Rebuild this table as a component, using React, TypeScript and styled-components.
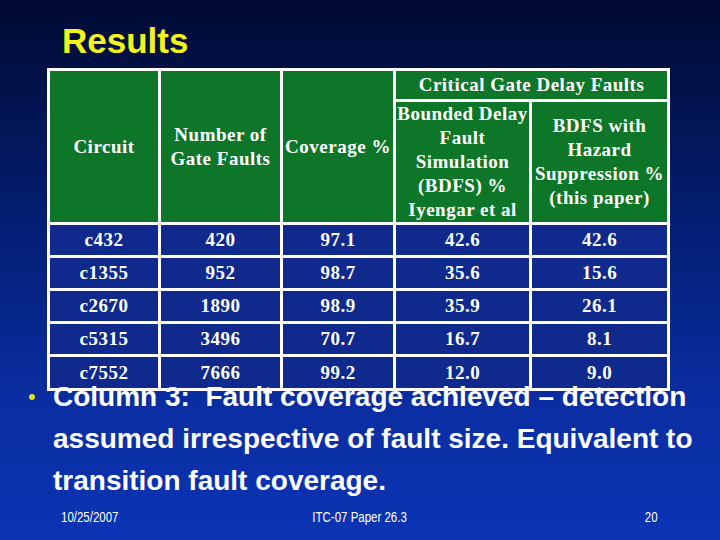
import React from "react";
import styled, { createGlobalStyle, css } from "styled-components";

const Global = createGlobalStyle`
  html, body { margin: 0; padding: 0; }
  body { width: 720px; height: 540px; overflow: hidden; }
`;

const serif = css`
  font-family: "Liberation Serif", "Times New Roman", "DejaVu Serif", serif;
  font-weight: 700;
  font-size: 19px;
  letter-spacing: 0.5px;
  color: #ffffff;
`;

const Slide = styled.div`
  position: relative;
  width: 720px;
  height: 540px;
  box-sizing: border-box;
  padding-top: 21px;
  background: linear-gradient(180deg, #000a32 0%, #02134d 18%, #05207a 45%, #0a2ea2 75%, #0a34b4 100%);
  display: flex;
  flex-direction: column;
  overflow: hidden;
`;

const Title = styled.h1`
  margin: 0 0 7px 62px;
  font-family: "Liberation Sans", Arial, sans-serif;
  font-weight: 700;
  font-size: 35px;
  line-height: 40px;
  color: #f4f41c;
`;

const Table = styled.table`
  ${serif};
  margin-left: 47px;
  width: 623px;
  table-layout: fixed;
  border-collapse: separate;
  border-spacing: 3px;
  background: #ffffff;
  position: relative;
  z-index: 0;
`;

const HeadCell = styled.th<{ $h?: number }>`
  ${serif};
  background: #0e7628;
  padding: 0;
  text-align: center;
  vertical-align: middle;
  line-height: 24px;
  white-space: nowrap;
  height: ${(p) => (p.$h ? `${p.$h}px` : "auto")};
`;

const DataCell = styled.td<{ $h: number }>`
  ${serif};
  background: #0f2a8c;
  padding: 0;
  text-align: center;
  vertical-align: middle;
  height: ${(p) => p.$h}px;
  line-height: 24px;
`;

const Body = styled.div`
  position: relative;
  z-index: 1;
  margin-top: -15px;
  display: flex;
  align-items: flex-start;
  padding-left: 29px;
  padding-right: 20px;
`;

const Bullet = styled.span`
  flex: 0 0 auto;
  width: 6px;
  height: 6px;
  border-radius: 50%;
  background: #e2e21e;
  margin-top: 18px;
  margin-right: 18px;
`;

const BodyText = styled.p`
  margin: 0;
  font-family: "Liberation Sans", Arial, sans-serif;
  font-weight: 700;
  font-size: 28px;
  line-height: 42px;
  color: #ffffff;
`;

const Footer = styled.div`
  margin-top: 6px;
  display: grid;
  grid-template-columns: 1fr auto 1fr;
  align-items: center;
  padding: 0 62px 0 61px;
  font-family: "Liberation Sans Narrow", "Arial Narrow", "Liberation Sans", sans-serif;
  font-size: 14px;
  line-height: 18px;
  color: #ffffff;
`;

const FootItem = styled.span<{ $align: "start" | "center" | "end" }>`
  display: inline-block;
  justify-self: ${(p) => p.$align};
  transform: scaleX(0.82);
  transform-origin: ${(p) => (p.$align === "start" ? "left" : p.$align === "end" ? "right" : "center")} center;
`;

const rows = [
  ["c432", "420", "97.1", "42.6", "42.6"],
  ["c1355", "952", "98.7", "35.6", "15.6"],
  ["c2670", "1890", "98.9", "35.9", "26.1"],
  ["c5315", "3496", "70.7", "16.7", "8.1"],
  ["c7552", "7666", "99.2", "12.0", "9.0"],
];

export default function App() {
  return (
    <>
      <Global />
      <Slide>
        <Title>Results</Title>
        <Table>
          <colgroup>
            <col style={{ width: 108 }} />
            <col style={{ width: 119 }} />
            <col style={{ width: 110 }} />
            <col style={{ width: 133 }} />
            <col style={{ width: 135 }} />
          </colgroup>
          <thead>
            <tr>
              <HeadCell rowSpan={2}>Circuit</HeadCell>
              <HeadCell rowSpan={2}>
                Number of
                <br />
                Gate Faults
              </HeadCell>
              <HeadCell rowSpan={2}>Coverage %</HeadCell>
              <HeadCell colSpan={2} $h={28}>
                Critical Gate Delay Faults
              </HeadCell>
            </tr>
            <tr>
              <HeadCell $h={120}>
                Bounded Delay
                <br />
                Fault
                <br />
                Simulation
                <br />
                (BDFS) %
                <br />
                Iyengar et al
              </HeadCell>
              <HeadCell $h={120}>
                BDFS with
                <br />
                Hazard
                <br />
                Suppression %
                <br />
                (this paper)
              </HeadCell>
            </tr>
          </thead>
          <tbody>
            {rows.map((r, i) => (
              <tr key={r[0]}>
                {r.map((v, j) => (
                  <DataCell key={j} $h={i === rows.length - 1 ? 31 : 30}>
                    {v}
                  </DataCell>
                ))}
              </tr>
            ))}
          </tbody>
        </Table>
        <Body>
          <Bullet />
          <BodyText>
            Column 3:&nbsp; Fault coverage achieved – detection assumed irrespective of fault size. Equivalent to
            transition fault coverage.
          </BodyText>
        </Body>
        <Footer>
          <FootItem $align="start">10/25/2007</FootItem>
          <FootItem $align="center">ITC-07 Paper 26.3</FootItem>
          <FootItem $align="end">20</FootItem>
        </Footer>
      </Slide>
    </>
  );
}
